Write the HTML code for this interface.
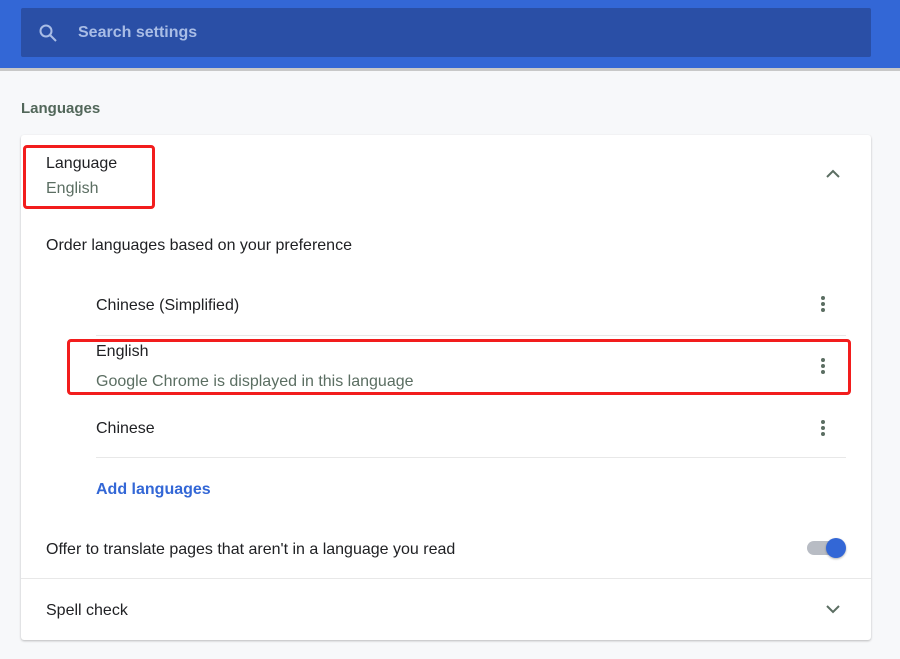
<!DOCTYPE html><html><head><style>
body{margin:0;width:900px;height:659px;background:#f7f8fa;font-family:"Liberation Sans",sans-serif;position:relative;overflow:hidden;color:#202124}
.hdr{position:absolute;left:0;top:0;width:900px;height:68px;background:#3367d6;border-bottom:3px solid #c8c8c8}
.sb{position:absolute;left:21px;top:8px;width:850px;height:49px;background:#2a4fa6;border-radius:2px}
.sb span{position:absolute;left:57px;top:16px;color:#a9bde6;font-size:16px;font-weight:bold}
.t{position:absolute;font-size:16px;white-space:nowrap;margin-top:1px}
.g{color:#5b6e62}
.card{position:absolute;left:21px;top:135px;width:850px;height:505px;background:#fff;border-radius:3px;box-shadow:0 1px 2px rgba(0,0,0,.25)}
.hr{position:absolute;height:1px;background:#e8e8e8}
.red{position:absolute;border:3px solid #f21d1d;border-radius:4px}
.dots{position:absolute;width:4px}
.dots i{display:block;width:4px;height:4px;border-radius:50%;background:#5b6e62;margin-bottom:2px}
</style></head><body>
<div class="hdr"><div class="sb">
<svg style="position:absolute;left:17px;top:15px" width="20" height="20" viewBox="0 0 20 20"><circle cx="8" cy="8" r="5.5" fill="none" stroke="#a9bde6" stroke-width="2"/><line x1="12" y1="12" x2="18" y2="18" stroke="#a9bde6" stroke-width="2"/></svg>
<span>Search settings</span></div></div>
<div class="t" style="left:21px;top:99px;color:#52675a;font-weight:bold;font-size:15px">Languages</div>
<div class="card"></div>
<div class="t" style="left:46px;top:154px">Language</div>
<div class="t g" style="left:46px;top:179px">English</div>
<svg style="position:absolute;left:826px;top:169px" width="14" height="10"><path d="M1 8 L7 2 L13 8" fill="none" stroke="#5b6e62" stroke-width="2"/></svg>
<div class="t" style="left:46px;top:236px">Order languages based on your preference</div>
<div class="t" style="left:96px;top:296px">Chinese (Simplified)</div>
<div class="dots" style="left:821px;top:296px"><i></i><i></i><i></i></div>
<div class="hr" style="left:96px;top:335px;width:750px"></div>
<div class="t" style="left:96px;top:342px">English</div>
<div class="t g" style="left:96px;top:372px">Google Chrome is displayed in this language</div>
<div class="dots" style="left:821px;top:358px"><i></i><i></i><i></i></div>
<div class="t" style="left:96px;top:419px">Chinese</div>
<div class="dots" style="left:821px;top:420px"><i></i><i></i><i></i></div>
<div class="hr" style="left:96px;top:457px;width:750px"></div>
<div class="t" style="left:96px;top:480px;color:#3367d6;font-weight:bold">Add languages</div>
<div class="t" style="left:46px;top:540px">Offer to translate pages that aren't in a language you read</div>
<div style="position:absolute;left:807px;top:541px;width:36px;height:14px;border-radius:7px;background:#b8bcc4"></div>
<div style="position:absolute;left:826px;top:538px;width:20px;height:20px;border-radius:50%;background:#3367d6;box-shadow:0 1px 2px rgba(0,0,0,.3)"></div>
<div class="hr" style="left:21px;top:578px;width:850px"></div>
<div class="t" style="left:46px;top:601px">Spell check</div>
<svg style="position:absolute;left:826px;top:604px" width="14" height="10"><path d="M1 2 L7 8 L13 2" fill="none" stroke="#5b6e62" stroke-width="2"/></svg>
<div class="red" style="left:23px;top:145px;width:126px;height:58px"></div>
<div class="red" style="left:67px;top:339px;width:778px;height:50px"></div>
</body></html>
